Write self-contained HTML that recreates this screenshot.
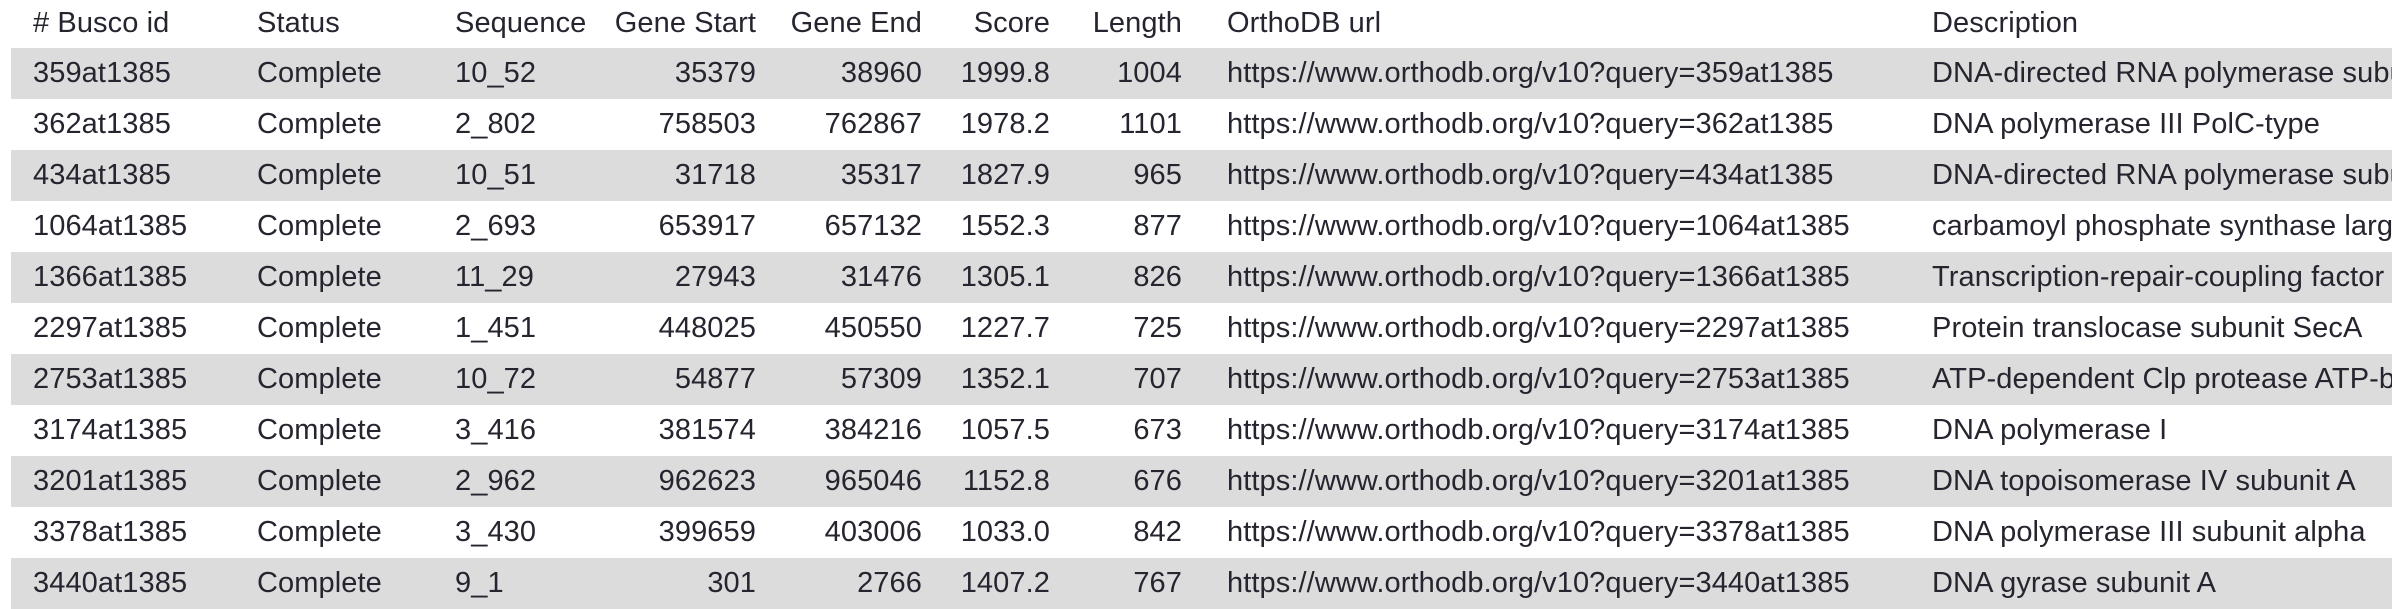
<!DOCTYPE html>
<html><head><meta charset="utf-8"><style>
html,body{margin:0;padding:0;background:#fff;}
body{width:2392px;height:607px;overflow:hidden;position:relative;font-family:"Liberation Sans",sans-serif;font-size:29px;color:#25252f;letter-spacing:0.1px;}
.r{position:absolute;left:0;width:2392px;height:51px;overflow:hidden;}
.g{background:#dcdcdc;left:11px;width:2381px;}
.c{position:absolute;top:0;line-height:51px;white-space:nowrap;}
.g .c{margin-left:-11px;}
.R{text-align:right;}
.desc{width:460px;overflow:hidden;}
</style></head><body>
<div class="r" style="top:-2px;height:50px">
<div class="c" style="left:33px">#&nbsp;Busco id</div>
<div class="c" style="left:257px">Status</div>
<div class="c" style="left:455px">Sequence</div>
<div class="c R" style="right:1636px">Gene Start</div>
<div class="c R" style="right:1470px">Gene End</div>
<div class="c R" style="right:1342px">Score</div>
<div class="c R" style="right:1210px">Length</div>
<div class="c" style="left:1227px">OrthoDB url</div>
<div class="c desc" style="left:1932px">Description</div>
</div>
<div id="rows"></div>
<script>
var d=[
["359at1385","10_52","35379","38960","1999.8","1004","DNA-directed RNA polymerase subunit beta"],
["362at1385","2_802","758503","762867","1978.2","1101","DNA polymerase III PolC-type"],
["434at1385","10_51","31718","35317","1827.9","965","DNA-directed RNA polymerase subunit beta'"],
["1064at1385","2_693","653917","657132","1552.3","877","carbamoyl phosphate synthase large subunit"],
["1366at1385","11_29","27943","31476","1305.1","826","Transcription-repair-coupling factor"],
["2297at1385","1_451","448025","450550","1227.7","725","Protein translocase subunit SecA"],
["2753at1385","10_72","54877","57309","1352.1","707","ATP-dependent Clp protease ATP-binding subunit"],
["3174at1385","3_416","381574","384216","1057.5","673","DNA polymerase I"],
["3201at1385","2_962","962623","965046","1152.8","676","DNA topoisomerase IV subunit A"],
["3378at1385","3_430","399659","403006","1033.0","842","DNA polymerase III subunit alpha"],
["3440at1385","9_1","301","2766","1407.2","767","DNA gyrase subunit A"]];
var h="";
d.forEach(function(r,i){
h+='<div class="r'+(i%2==0?' g':'')+'" style="top:'+(48+i*51)+'px">'+
'<div class="c" style="left:33px">'+r[0]+'</div>'+
'<div class="c" style="left:257px">Complete</div>'+
'<div class="c" style="left:455px">'+r[1]+'</div>'+
'<div class="c R" style="right:1636px">'+r[2]+'</div>'+
'<div class="c R" style="right:1470px">'+r[3]+'</div>'+
'<div class="c R" style="right:1342px">'+r[4]+'</div>'+
'<div class="c R" style="right:1210px">'+r[5]+'</div>'+
'<div class="c" style="left:1227px">https://www.orthodb.org/v10?query='+r[0]+'</div>'+
'<div class="c desc" style="left:1932px">'+r[6]+'</div></div>';
});
document.getElementById("rows").outerHTML=h;
</script>
</body></html>
